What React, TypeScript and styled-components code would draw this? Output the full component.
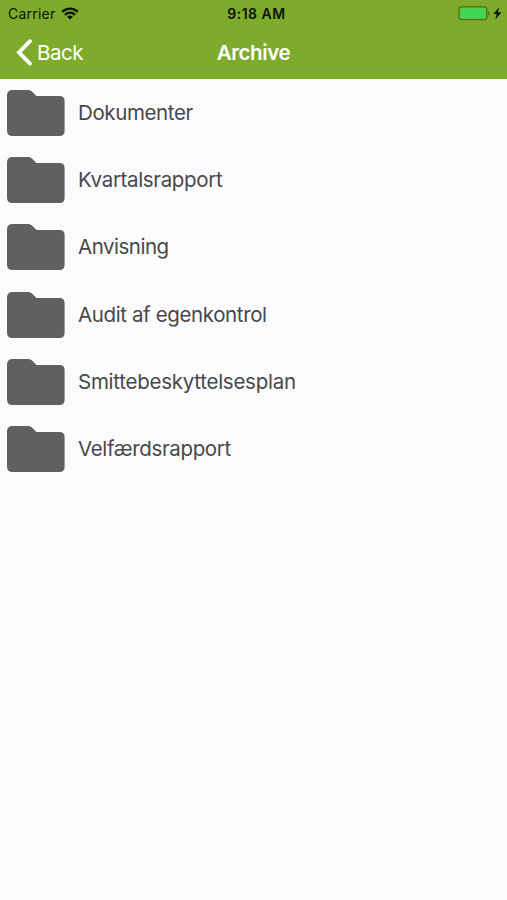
import React from 'react';
import styled, { createGlobalStyle } from 'styled-components';

const GlobalStyle = createGlobalStyle`
  * { box-sizing: border-box; }
  body {
    margin: 0;
    background: #fbfbfd;
    font-family: Inter, "Liberation Sans", sans-serif;
  }
`;

const Screen = styled.main`
  min-height: 100vh;
  background: #fbfbfd;
`;

const TopArea = styled.header`
  height: 79px;
  background: #7dac2c;
`;

const StatusBar = styled.div`
  display: grid;
  grid-template-columns: 1fr auto 1fr;
  align-items: center;
  height: 27px;
  padding: 0 5px 0 8px;
  color: #0d1404;
`;

const Carrier = styled.div`
  display: flex;
  align-items: center;
  gap: 6px;
  font-size: 14px;
  letter-spacing: 0.22px;
`;

const Clock = styled.div`
  padding-left: 3px;
  font-size: 14px;
  font-weight: 600;
  letter-spacing: 0.5px;
`;

const Power = styled.div`
  display: flex;
  align-items: center;
  justify-content: flex-end;
  gap: 3px;
`;

const NavBar = styled.nav`
  display: grid;
  grid-template-columns: 1fr auto 1fr;
  align-items: center;
  height: 51px;
  padding: 0 16px;
  color: #fff;
`;

const BackButton = styled.button`
  display: flex;
  align-items: center;
  gap: 4px;
  padding: 0;
  border: 0;
  background: none;
  color: inherit;
  font: 400 20.5px Inter, sans-serif;
  letter-spacing: -0.45px;
`;

const Title = styled.h1`
  margin: 0;
  font-size: 20.5px;
  font-weight: 600;
  letter-spacing: -0.4px;
`;

const FolderList = styled.ul`
  margin: 0;
  padding: 0.4px 0 0;
  list-style: none;
`;

const FolderRow = styled.li`
  display: flex;
  align-items: center;
  gap: 13px;
  height: 67.2px;
  padding-left: 7px;
`;

const Label = styled.span<{ $tracking: number }>`
  color: #48484a;
  font-size: 20.5px;
  line-height: 24px;
  letter-spacing: ${(p) => p.$tracking}px;
`;

const WifiIcon = () => (
  <svg width="18" height="13" viewBox="0 0 18 13" fill="none" stroke="currentColor" strokeWidth="2.4">
    <path d="M1.3 4.8C5.5.5 12.5.5 16.7 4.8" />
    <path d="M4 7.8c2.9-2.7 7.1-2.7 10 0" />
    <path d="M9 12.6 6.1 9.7c1.6-1.5 4.2-1.5 5.8 0Z" fill="currentColor" stroke="none" />
  </svg>
);

const BatteryIcon = () => (
  <svg width="32" height="15" viewBox="0 0 32 15">
    <rect x="0.9" y="0.9" width="28" height="12.8" rx="2.6" fill="none" stroke="#4b711b" strokeWidth="1.2" />
    <rect x="2.2" y="2.2" width="25.4" height="10.2" rx="1.3" fill="#43d656" />
    <path d="M30 5.2c2 .7 2 3.7 0 4.4Z" fill="#4b711b" />
  </svg>
);

const BoltIcon = () => (
  <svg width="9" height="13" viewBox="0 0 9 13">
    <path d="M6.2.3.4 7.1h3.3L2.4 12.6 8.5 5.3H5Z" fill="currentColor" />
  </svg>
);

const ChevronIcon = () => (
  <svg width="17" height="27" viewBox="0 0 17 27" fill="none" stroke="currentColor" strokeWidth="3.8">
    <path d="M14 2.2 3 13.4l11 11.2" strokeLinecap="round" strokeLinejoin="miter" />
  </svg>
);

const FolderIcon = () => (
  <svg width="58" height="46" viewBox="0 0 58 46">
    <path
      d="M5.5 0H21.5Q23.5 0 25 1.5L29.5 6H52.5Q57.6 6 57.6 11V41Q57.6 46 52.5 46H5.5Q0 46 0 40.5V5.5Q0 0 5.5 0Z"
      fill="#606060"
    />
  </svg>
);

const folders = [
  { name: 'Dokumenter', tracking: -0.38 },
  { name: 'Kvartalsrapport', tracking: -0.34 },
  { name: 'Anvisning', tracking: -0.48 },
  { name: 'Audit af egenkontrol', tracking: -0.38 },
  { name: 'Smittebeskyttelsesplan', tracking: -0.26 },
  { name: 'Velfærdsrapport', tracking: -0.36 },
];

export default function App() {
  return (
    <Screen>
      <GlobalStyle />
      <TopArea>
        <StatusBar>
          <Carrier>
            <span>Carrier</span>
            <WifiIcon />
          </Carrier>
          <Clock>9:18 AM</Clock>
          <Power>
            <BatteryIcon />
            <BoltIcon />
          </Power>
        </StatusBar>
        <NavBar>
          <BackButton type="button">
            <ChevronIcon />
            Back
          </BackButton>
          <Title>Archive</Title>
        </NavBar>
      </TopArea>
      <FolderList>
        {folders.map((folder) => (
          <FolderRow key={folder.name}>
            <FolderIcon />
            <Label $tracking={folder.tracking}>{folder.name}</Label>
          </FolderRow>
        ))}
      </FolderList>
    </Screen>
  );
}
